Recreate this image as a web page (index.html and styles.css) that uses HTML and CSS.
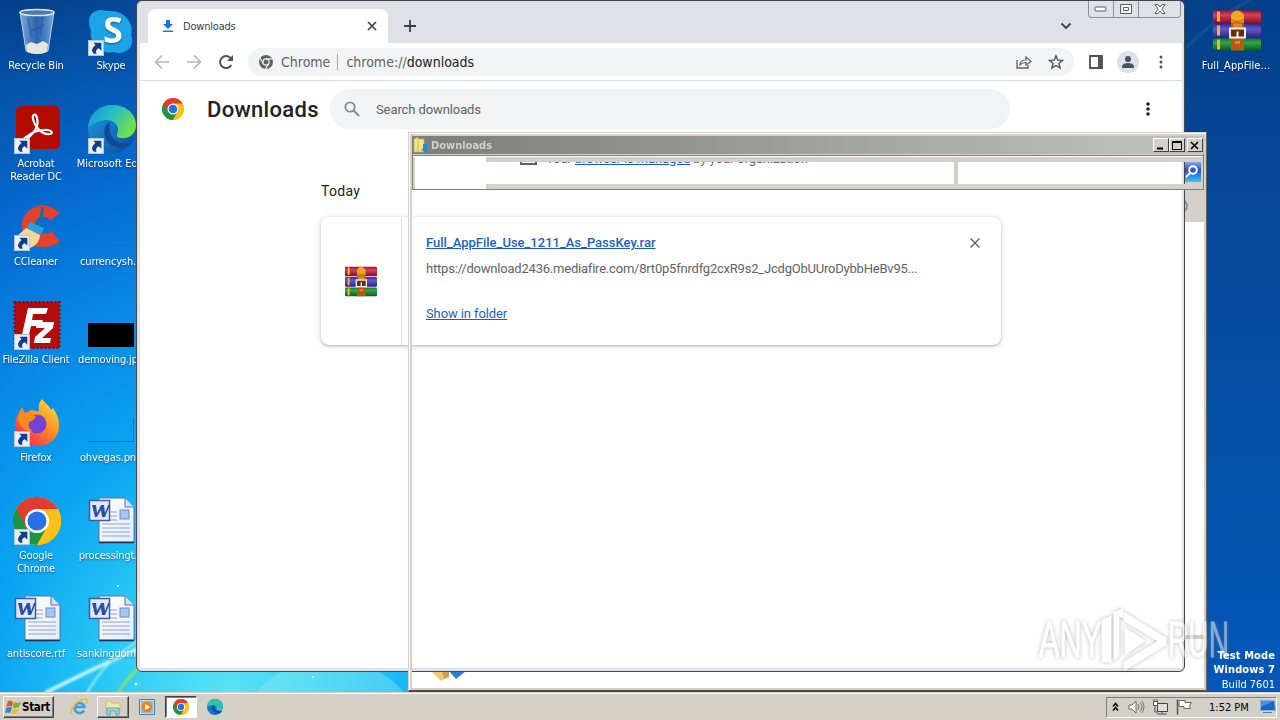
FILE: index.html
```html
<!DOCTYPE html>
<html lang="en">
<head>
    <meta charset="UTF-8">
    <meta name="viewport" content="width=device-width, initial-scale=1.0">
    <title>Downloads</title>
    <link rel="stylesheet" href="styles.css">
</head>
<body>
    <!-- Shared icons -->
    <svg class="sprite" width="0" height="0">
        <defs>
            <linearGradient id="paper" x1="0" y1="0" x2="1" y2="1"><stop offset="0" stop-color="#fff"/><stop offset="1" stop-color="#e3ebfa"/></linearGradient>
            <linearGradient id="book-red" x1="0" y1="0" x2="0" y2="1"><stop offset="0" stop-color="#a01030"/><stop offset=".35" stop-color="#d8405a"/><stop offset="1" stop-color="#7d0c26"/></linearGradient>
            <linearGradient id="book-blue" x1="0" y1="0" x2="0" y2="1"><stop offset="0" stop-color="#4030a0"/><stop offset=".35" stop-color="#6458c8"/><stop offset="1" stop-color="#2c2180"/></linearGradient>
            <linearGradient id="book-green" x1="0" y1="0" x2="0" y2="1"><stop offset="0" stop-color="#107830"/><stop offset=".35" stop-color="#35a648"/><stop offset="1" stop-color="#085a20"/></linearGradient>
            <linearGradient id="edge-top" x1="0" y1="0" x2="1" y2=".5"><stop offset="0" stop-color="#1590d8"/><stop offset=".5" stop-color="#27bcc8"/><stop offset="1" stop-color="#6fe04a"/></linearGradient>
            <linearGradient id="edge-low" x1="0" y1="0" x2="1" y2="1"><stop offset="0" stop-color="#1b9de2"/><stop offset="1" stop-color="#0c4a9a"/></linearGradient>
            <linearGradient id="fox" x1="1" y1="0" x2=".2" y2="1"><stop offset="0" stop-color="#fff04a"/><stop offset=".45" stop-color="#ff9722"/><stop offset="1" stop-color="#f5244f"/></linearGradient>
            <linearGradient id="bin" x1="0" y1="0" x2="1" y2="0"><stop offset="0" stop-color="#a9c8e8" stop-opacity=".8"/><stop offset=".5" stop-color="#3f78bf" stop-opacity=".6"/><stop offset="1" stop-color="#9bbde2" stop-opacity=".8"/></linearGradient>
        </defs>
        <symbol id="chrome" viewBox="0 0 48 48">
            <circle cx="24" cy="24" r="24" fill="#fbc116"/>
            <path d="M24 24 3.2 12A24 24 0 0 0 24 48L34.4 30z" fill="#229342"/>
            <path d="M24 24 34.4 30 24 48A24 24 0 0 0 44.8 12H24z" fill="#fbc116"/>
            <path d="M3.2 12A24 24 0 0 1 44.8 12H24L13.6 30z" fill="#e33b2e"/>
            <circle cx="24" cy="24" r="12" fill="#fff"/>
            <circle cx="24" cy="24" r="9.5" fill="#2a6fe8"/>
        </symbol>
        <symbol id="winrar" viewBox="0 0 48 42">
            <rect y="1" width="48" height="13" rx="1.500" fill="url(#book-red)"/>
            <rect y="15" width="48" height="13" rx="1.500" fill="url(#book-blue)"/>
            <rect y="29" width="48" height="12" rx="1.500" fill="url(#book-green)"/>
            <path d="M4 2h3v10H4zM4 16h3v10H4zM4 30h3v10H4z" fill="#f3b52d"/>
            <path d="M18 13h13v28H18z" fill="#b65a12"/>
            <path d="M18 13V5q6-8 13 0v8z" fill="#f3a51d"/>
            <path d="M18 10q7 4 13 0" fill="none" stroke="#b36408"/>
            <path d="M20 14h9v5h-9z" fill="#d98a1c"/>
            <rect x="17" y="19" width="15" height="9" fill="#6e2808" stroke="#eee" stroke-width="2"/>
            <path d="M24.500 22v6" stroke="#fff" stroke-width="2"/>
            <path d="M22 33h5" stroke="#ed9c42" stroke-width="2"/>
        </symbol>
        <symbol id="word" viewBox="0 0 48 48">
            <path d="M12 2h26l9 9v35H12z" fill="url(#paper)" stroke="#58709f"/>
            <path d="M47 46.500H12" stroke="#1c315c" stroke-width="1.500"/>
            <path d="M38 2v9h9" fill="#d5e0f5" stroke="#58709f"/>
            <path d="M15 16h15M15 20h15M15 24h15M15 28h28M15 32h28M15 36h28M15 40h28" stroke="#8ba4d6"/>
            <rect x="33" y="14" width="9" height="9" fill="#a6c4ee" stroke="#6d8cc4"/>
            <rect x="2.500" y="4.500" width="20" height="20" fill="#dfe9fa" stroke="#3b5da5" stroke-width="1.500"/>
            <path d="M5 9h4l1 8 4-8h3l1 8 3-8h2l-5 12h-3l-1-7-4 7H8z" fill="#2d50a0"/>
        </symbol>
        <symbol id="shortcut" viewBox="0 0 15 15">
            <rect x=".5" y=".5" width="14" height="14" fill="#e8f0f8" stroke="#b5c3d3"/>
            <path d="M5 2.500h7.500V10l-2.300-2.300Q6.500 9 8 13H5.500Q1.500 9 7 4.700z" fill="#123f84"/>
        </symbol>
        <symbol id="edge" viewBox="0 0 48 48">
            <circle cx="24" cy="24" r="24" fill="url(#edge-low)"/>
            <path d="M0 23C1 8 12 0 25 0c14 0 23 10 23 20 0 9-7 14-15 13-6 0-4-4-3-7 1-8-8-13-17-10C6 18 2 20 0 23z" fill="url(#edge-top)"/>
            <path d="M22 17c-8 3-8 18 3 24 8 4 16 1 20-5-8 6-27 1-23-19z" fill="#0d4b98"/>
        </symbol>
        <symbol id="edge-small" viewBox="0 0 16 16">
            <circle cx="8" cy="8" r="8" fill="#1377cf"/>
            <path d="M0 8C0 3 4 0 8 0c5 0 8 3 8 7 0 3-2 4-5 4-2 0-1-1-1-2 0-3-6-4-10-1z" fill="#2fc2a8"/>
            <path d="M7 6c-3 1-2 6 2 8 3 1 5 0 6-2-3 1-8 0-8-6z" fill="#0d4b98"/>
            <path d="M10 9c0 2 2 3 6 2v-1q-2 1-5 1-2 0-1-2z" fill="#d4d0c8"/>
        </symbol>
    </svg>

    <div class="desktop">
        <svg class="wallpaper" viewBox="0 0 1280 720">
            <defs><filter id="soft"><feGaussianBlur stdDeviation="1"/></filter></defs>
            <ellipse cx="330" cy="735" rx="90" ry="75" fill="#9aeaf2" opacity=".35"/>
            <g fill="none" filter="url(#soft)">
                <path d="M45 693Q90 670 140 648" stroke="#b9f4ff" stroke-width="4"/>
                <path d="M87 693Q105 660 140 640" stroke="#9defff" stroke-width="2"/>
                <path d="M118 693Q126 680 140 666" stroke="#83e66c" stroke-width="3"/>
                <path d="M1186 48Q1220 15 1250 0" stroke="#3f7f9a" stroke-width="2" opacity=".4"/>
            </g>
            <g fill="#d9fbff"><circle cx="118" cy="586" r="1"/><circle cx="136" cy="684" r="1.500"/><circle cx="313" cy="677" r="1"/></g>
        </svg>

        <!-- Desktop shortcuts -->
        <div class="shortcuts">
            <div class="shortcut">
                <svg class="icon" viewBox="0 0 48 48">
                    <path d="M7 4h34l-6 39q-11 5-22 0z" fill="url(#bin)" stroke="#b8cde2"/>
                    <path d="m13 37 5-3 6 2 6-3 5 3-1 8q-10 4-20 0z" fill="#e6e5de"/>
                    <path d="m15 10 4 20M30 9l-3 17M16 24l15-7" stroke="#1c56a0" stroke-width="2" opacity=".5"/>
                    <ellipse cx="24" cy="4.500" rx="17" ry="3" fill="#4c79b2" stroke="#e0e8ef" stroke-width="1.500"/>
                </svg>
                <span>Recycle Bin</span>
            </div>
            <div class="shortcut">
                <svg class="icon" viewBox="0 0 48 48">
                    <path d="M14 2q5 1 8 1c15-1 26 13 22 24 5 11-6 21-17 17C14 47 2 36 4 22-1 11 4 2 14 2z" fill="#1ca5e6"/>
                    <text class="skype-s" x="16" y="35">S</text>
                    <use href="#shortcut" x="1" y="32" width="16" height="16"/>
                </svg>
                <span>Skype</span>
            </div>
            <div class="shortcut">
                <svg class="icon" viewBox="0 0 48 48">
                    <rect x="3" y="0" width="44" height="43" rx="5" fill="#b30b00"/>
                    <path d="M12 34c10-7 14-15 12-22-1-5-5-4-4 1 2 8 9 16 17 15 4-1 1-5-6-4-6 0-13 3-18 7-4 3-4 6-1 3z" fill="none" stroke="#fff" stroke-width="2.200"/>
                    <use href="#shortcut" x="1" y="32" width="16" height="16"/>
                </svg>
                <span>Acrobat<br>Reader DC</span>
            </div>
            <div class="shortcut">
                <svg class="icon" viewBox="0 0 48 48">
                    <use href="#edge" x="1" y="-1" width="48" height="48"/>
                    <use href="#shortcut" x="1" y="32" width="16" height="16"/>
                </svg>
                <span class="wide">Microsoft Edge</span>
            </div>
            <div class="shortcut">
                <svg class="icon" viewBox="0 0 48 48">
                    <path d="M47 9C32-6 9 3 9 22c0 20 20 27 38 16l-8-11c-9 7-17 1-17-6 0-8 9-11 16-5z" fill="#e1432d"/>
                    <path d="m30 3-4 19" stroke="#1670ae" stroke-width="3"/>
                    <path d="m17 18 14 6-3 7-15-6z" fill="#2c9fd9"/>
                    <path d="m13 24 14 7q0 9-10 13Q6 42 2 34z" fill="#f4d59a"/>
                    <use href="#shortcut" x="1" y="31" width="16" height="16"/>
                </svg>
                <span>CCleaner</span>
            </div>
            <div class="shortcut">
                <div class="thumb thumb-line"></div>
                <span>currencysh...</span>
            </div>
            <div class="shortcut">
                <svg class="icon" viewBox="0 0 48 48">
                    <rect x="1.500" y="0" width="45" height="46" fill="#b40b0b" stroke="#8f0909" stroke-width="2" stroke-dasharray="2 2"/>
                    <path d="M15 6h20l-2 6H20l-1 6h11l-2 6H18l-3 13H8zM24 20h17l-1 6-11 10h9l-1 5H21l1-6 10-9h-9z" fill="#fff"/>
                    <use href="#shortcut" x="1" y="32" width="16" height="16"/>
                </svg>
                <span>FileZilla Client</span>
            </div>
            <div class="shortcut">
                <div class="thumb thumb-black"></div>
                <span>demoving.jpg</span>
            </div>
            <div class="shortcut">
                <svg class="icon" viewBox="0 0 48 48">
                    <path d="M29-1c3 4 7 6 9 11l2-2c12 17 6 37-15 38C7 47-3 31 5 14l4-7 3 6 6-3c4 0 5 2 8 1-1-5 0-9 3-12z" fill="url(#fox)"/>
                    <circle cx="24" cy="24" r="9.500" fill="#7542d6"/>
                    <path d="M7 12q7 0 10 3l6 1q-2 5-7 6-2 6 4 9-13 0-15-12z" fill="#ff8b20"/>
                    <use href="#shortcut" x="1" y="31" width="16" height="16"/>
                </svg>
                <span>Firefox</span>
            </div>
            <div class="shortcut">
                <div class="thumb thumb-line"></div>
                <span>ohvegas.png</span>
            </div>
            <div class="shortcut">
                <svg class="icon" viewBox="0 0 48 48">
                    <use href="#chrome" y="-1" width="48" height="48"/>
                    <use href="#shortcut" x="1" y="31" width="16" height="16"/>
                </svg>
                <span>Google<br>Chrome</span>
            </div>
            <div class="shortcut"><svg class="icon"><use href="#word" y="-2" width="48" height="48"/></svg><span>processingt...</span></div>
            <div class="shortcut"><svg class="icon"><use href="#word" y="-2" width="48" height="48"/></svg><span>antiscore.rtf</span></div>
            <div class="shortcut"><svg class="icon"><use href="#word" y="-2" width="48" height="48"/></svg><span>sankingdom...</span></div>
        </div>
        <div class="shortcut shortcut-right">
            <svg class="icon"><use href="#winrar" y="1" width="48" height="43"/></svg>
            <span>Full_AppFile...</span>
        </div>

        <!-- Part of the folder window behind the browser -->
        <div class="folder-back">
            <svg class="folder-peek" viewBox="0 0 36 11"><path d="m0 0 10 10 8-5V0z" fill="#eccb72"/><path d="m11 0 2 8 5-2V0z" fill="#caa34f"/><path d="M18 0h17l-10 8z" fill="#2c7fd0"/></svg>
            <div class="folder-side"><span></span></div>
            <div class="folder-mark"></div>
        </div>

        <!-- Browser window -->
        <div class="browser">
            <div class="tabstrip">
                <div class="tab">
                    <svg width="12" height="14" viewBox="0 0 12 14"><path d="M4 1h4v4h3l-5 5-5-5h3zM1 11.500h10V13H1z" fill="#1a73e8"/></svg>
                    <span>Downloads</span>
                    <svg width="10" height="10" viewBox="0 0 10 10"><path d="m1 1 8 8M9 1 1 9" stroke="#3c4043" stroke-width="1.600"/></svg>
                </div>
                <svg class="new-tab" width="12" height="12" viewBox="0 0 12 12"><path d="M6 0v12M0 6h12" stroke="#3c4043" stroke-width="1.800"/></svg>
                <svg class="tab-search" width="12" height="8" viewBox="0 0 12 8"><path d="m1.500 1.500 4.500 4.500 4.500-4.500" fill="none" stroke="#3c4043" stroke-width="1.800"/></svg>
                <div class="caption">
                    <span><svg width="14" height="6"><rect x="1" y="1" width="11" height="4" rx="1" fill="#fff" stroke="#555b66"/></svg></span>
                    <span><svg width="12" height="10"><path d="M.5.5h11v9H.5zM3.500 3.500h5v3h-5z" fill="#fff" stroke="#555b66"/></svg></span>
                    <span><svg width="12" height="10" viewBox="0 0 12 10"><path d="M1 .5h3L6 3 8 .5h3L7.800 5 11 9.500H8L6 7 4 9.500H1L4.200 5z" fill="#fff" stroke="#555b66"/></svg></span>
                </div>
            </div>
            <div class="toolbar">
                <svg class="nav" viewBox="0 0 16 16"><path d="M15 8H2M8 1.500 1.500 8 8 14.500" fill="none" stroke="#b4b7ba" stroke-width="1.700"/></svg>
                <svg class="nav" viewBox="0 0 16 16"><path d="M1 8h13M8 1.500 14.500 8 8 14.500" fill="none" stroke="#b4b7ba" stroke-width="1.700"/></svg>
                <svg class="nav" viewBox="0 0 16 16"><path d="M13.300 11A6 6 0 1 1 12.500 4" fill="none" stroke="#505357" stroke-width="2"/><path d="M15 1v6H9z" fill="#505357"/></svg>
                <div class="omnibox">
                    <svg width="14" height="14" viewBox="0 0 14 14"><circle cx="7" cy="7" r="7" fill="#5f6368"/><circle cx="7" cy="7" r="3.100" fill="#5f6368" stroke="#f1f3f4" stroke-width="1.200"/><path d="M7 3.900h6.500M4.300 8.500 1 3M9.700 8.500 6.500 14" stroke="#f1f3f4" stroke-width="1.200"/></svg>
                    <span class="chip">Chrome</span>
                    <span class="url">chrome://<b>downloads</b></span>
                    <svg class="share" width="16" height="14" viewBox="0 0 16 14"><path d="M1 5v8h11v-3" fill="none" stroke="#5f6368" stroke-width="1.300"/><path d="M4 10q0-5 6-5V2l5 4.500L10 10V7.500Q6 7.500 4 10z" fill="none" stroke="#5f6368" stroke-width="1.200"/></svg>
                    <svg width="16" height="16" viewBox="0 0 16 16"><path d="m8 1.800 1.800 4.300 4.700.3-3.600 3 1.200 4.600L8 11.500 3.900 14l1.200-4.600-3.600-3 4.700-.3z" fill="none" stroke="#505357" stroke-width="1.400"/></svg>
                </div>
                <svg width="14" height="14" viewBox="0 0 14 14"><path d="M1 1h12v12H1z" fill="none" stroke="#505357" stroke-width="1.800"/><path d="M9 1h4v12H9z" fill="#505357"/></svg>
                <div class="avatar"><svg width="12" height="12" viewBox="0 0 12 12"><circle cx="6" cy="3" r="3" fill="#4a5262"/><path d="M0 12v-2q1-3 6-3t6 3v2z" fill="#4a5262"/></svg></div>
                <svg width="4" height="14" viewBox="0 0 4 14"><g fill="#505357"><circle cx="2" cy="2" r="1.500"/><circle cx="2" cy="7" r="1.500"/><circle cx="2" cy="12" r="1.500"/></g></svg>
            </div>
            <div class="page">
                <div class="page-header">
                    <svg width="22" height="22"><use href="#chrome" width="22" height="22"/></svg>
                    <h1>Downloads</h1>
                    <div class="search">
                        <svg width="16" height="16" viewBox="0 0 16 16"><circle cx="6" cy="6" r="4.700" fill="none" stroke="#85898d" stroke-width="1.800"/><path d="m9.500 9.500 5.500 5.500" stroke="#85898d" stroke-width="2"/></svg>
                        <span>Search downloads</span>
                    </div>
                    <svg class="page-menu" width="4" height="14" viewBox="0 0 4 14"><g fill="#202124"><circle cx="2" cy="2" r="1.800"/><circle cx="2" cy="7" r="1.800"/><circle cx="2" cy="12" r="1.800"/></g></svg>
                </div>
                <div class="managed">
                    <svg width="17" height="14" viewBox="0 0 17 14"><path d="M1 1h9v4h6v8H1z" fill="none" stroke="#5f6368" stroke-width="2"/><path d="M3 10h2M7 10h2M12 10h2M3 6h2M7 6h2" stroke="#5f6368" stroke-width="2"/></svg>
                    <span>Your <a>browser is managed</a> by your organization</span>
                </div>
                <div class="downloads">
                    <h2>Today</h2>
                    <div class="card">
                        <div class="file-icon"><svg width="32" height="31" viewBox="0 0 48 42" preserveAspectRatio="none"><use href="#winrar" width="48" height="42"/></svg></div>
                        <div class="details">
                            <a class="file-name">Full_AppFile_Use_1211_As_PassKey.rar</a>
                            <span class="file-url">https://download2436.mediafire.com/8rt0p5fnrdfg2cxR9s2_JcdgObUUroDybbHeBv95...</span>
                            <a class="show">Show in folder</a>
                        </div>
                        <svg class="remove" width="10" height="10" viewBox="0 0 10 10"><path d="m.5.5 9 9m0-9-9 9" stroke="#5f6368" stroke-width="1.400"/></svg>
                    </div>
                </div>
            </div>
        </div>

        <!-- Folder window, contents not painted yet -->
        <div class="folder">
            <div class="folder-title">
                <svg width="16" height="16" viewBox="0 0 16 16"><path d="M1 2 5 0v2h6v13H1z" fill="#f3e28b" stroke="#c9ad4d" stroke-width=".7"/><path d="M5 2v13" stroke="#d2b85b"/><path d="M10 7h4v5h2l-4 4-4-4h2z" fill="#1790d6"/></svg>
                <span>Downloads</span>
                <div class="buttons">
                    <span><svg width="10" height="9"><path d="M1 7.500h6" stroke="#000" stroke-width="2"/></svg></span>
                    <span><svg width="10" height="9"><path d="M.5 1.500h9M.5 1v7.500h9V1" fill="none" stroke="#000"/><path d="M0 1h10" stroke="#000" stroke-width="2"/></svg></span>
                    <span><svg width="10" height="9"><path d="m1 1 7 7m0-7-7 7" stroke="#000" stroke-width="1.600"/></svg></span>
                </div>
            </div>
            <div class="rebar">
                <div class="rebar-blank"></div>
                <div class="address"></div>
                <div class="find"></div>
                <svg class="find-button" width="18" height="32" viewBox="0 0 18 32"><defs><linearGradient id="find" x1="0" y1="0" x2="0" y2="1"><stop offset="0" stop-color="#8ba6e8"/><stop offset=".4" stop-color="#2850c8"/><stop offset="1" stop-color="#35c8ec"/></linearGradient></defs><path d="M0 5h16v20H0z" fill="url(#find)"/><circle cx="8" cy="13" r="3.800" fill="none" stroke="#fff" stroke-width="2"/><path d="m5 16-4 4" stroke="#fff" stroke-width="2"/></svg>
            </div>
        </div>

        <div class="taskbar">
            <div class="start">
                <svg width="17" height="15" viewBox="0 0 17 15"><path d="M3 1q3-1 5 1L7 7Q4 5 1 7z" fill="#e9562b"/><path d="M9 2q3 2 7 0l-2 5q-4 2-6 0z" fill="#6eb43f"/><path d="M1 8q3-2 6 0l-2 5q-2-1-5 0z" fill="#2c86cf"/><path d="M8 8q3 2 6 0l-2 5q-3 2-6 0z" fill="#f8bd25"/></svg>
                <b>Start</b>
            </div>
            <div class="quick">
                <div class="task"><svg width="18" height="18" viewBox="0 0 18 18"><path d="M14 12.500A5 5 0 1 1 14.500 9H5" fill="none" stroke="#38a1df" stroke-width="2.600"/><path d="M2 16Q-1 15 4 8T16 1q2 1 0 5" fill="none" stroke="#e7bd31" stroke-width="1.500"/></svg></div>
                <div class="task task-open"><svg width="18" height="17" viewBox="0 0 18 17"><path d="M2 2h5l1 2h8v10H2z" fill="#f4e6a3" stroke="#d9bd65"/><path d="M3 9h12v7h-3v-4H6v4H3z" fill="#9bd5f0" stroke="#4fa5cc"/></svg></div>
                <div class="task"><svg width="16" height="16" viewBox="0 0 16 16"><path d="M.5.5h15v15H.5z" fill="#b9dcf3" stroke="#3d83bc"/><path d="M2 2h12v12H2z" fill="#8dc0e4"/><circle cx="8" cy="8" r="5.500" fill="#f58218"/><path d="m6 5 5 3-5 3z" fill="#fff"/></svg></div>
                <div class="task task-active"><svg width="16" height="16"><use href="#chrome" width="16" height="16"/></svg></div>
                <div class="task"><svg width="16" height="16"><use href="#edge-small" width="16" height="16"/></svg></div>
            </div>
            <div class="tray">
                <svg width="7" height="10" viewBox="0 0 7 10"><path d="m1 4.500 2.500-3 2.500 3m-5 4 2.500-3 2.500 3" fill="none" stroke="#000" stroke-width="1.500"/></svg>
                <svg width="17" height="14" viewBox="0 0 17 14"><path d="M1 5h3l4-4v12L4 9H1z" fill="#fff" stroke="#666"/><path d="M10 4q2 3 0 6M12 2.500q4 4.500 0 9M14 1q4 6 0 12" fill="none" stroke="#777"/></svg>
                <svg width="17" height="16" viewBox="0 0 17 16"><path d="M5.500 4.500h10v8h-10z" fill="#ddd" stroke="#444"/><path d="M5 15h10M10 13v2M3 6v7h3" fill="none" stroke="#555"/><path d="M1.500 2.500h4v4h-4zM2 0v3M5 0v3" fill="#fff" stroke="#555"/></svg>
                <svg width="17" height="16" viewBox="0 0 17 16"><path d="M1.500.5v15" stroke="#555" stroke-width="1.500"/><path d="M3 1.500h6v2h6.500l-2 3 1 3H8v-2H3z" fill="#fff" stroke="#666"/></svg>
                <span>1:52 PM</span>
                <svg width="16" height="14" viewBox="0 0 16 14"><path d="M.5.500h14l1 10H.5z" fill="#1764c4" stroke="#91b2d6"/><path d="M1 1h13L1 7z" fill="#3d91e6"/><path d="M3 12h9v1H3z" fill="#678"/></svg>
            </div>
        </div>

        <svg class="watermark" width="210" height="76" viewBox="0 0 210 76">
            <text x="9" y="54" textLength="63" lengthAdjust="spacingAndGlyphs">ANY</text>
            <text x="138" y="54" textLength="61" lengthAdjust="spacingAndGlyphs">RUN</text>
            <path d="M72 59V17l9-4v46zM84 57V9l9-3v9l-4-2v40zM94 9l42 26v7L94 68v-9l34-21-34-20zM95 25l20 13-20 14z"/>
        </svg>

        <div class="build-info"><b>Test Mode</b><b>Windows 7</b><span>Build 7601</span></div>
    </div>
</body>
</html>
```
FILE: styles.css
```css
* {
    box-sizing: border-box;
}

body {
    margin: 0;
    font-family: 'DejaVu Sans Condensed', 'DejaVu Sans', sans-serif;
    font-stretch: condensed;
    font-size: 11px;
}

svg {
    display: block;
    flex: none;
}

.sprite {
    position: absolute;
}

.desktop {
    position: relative;
    width: 1280px;
    height: 720px;
    overflow: hidden;
    background: radial-gradient(ellipse 640px 740px at 230px 700px, #5be4f4 0%, #28c8f5 20%, #0aa4f2 37%, #0888e4 55%, #066cd2 72%, rgba(6, 80, 180, 0) 100%), linear-gradient(#04408a, #0450a8 60%, #0458bc);
}

.wallpaper {
    position: absolute;
    inset: 0;
}

/* Desktop shortcuts */
.shortcuts {
    display: grid;
    grid-template-columns: 74px 74px;
    grid-auto-rows: 98px;
    width: 148px;
    padding-top: 8px;
}

.shortcut {
    display: flex;
    flex-direction: column;
    align-items: center;
    position: relative;
    color: #fff;
    line-height: 13px;
    text-align: center;
    white-space: nowrap;
    letter-spacing: -0.15px;
    text-shadow: 0 1px 2px rgba(0, 30, 80, 0.6);
}

.shortcut span {
    margin-top: 3px;
}

.shortcut:nth-child(odd) span {
    margin-right: 2px;
}

.shortcut .wide {
    margin-left: 5px;
    letter-spacing: 0.05px;
}

.icon {
    width: 48px;
    height: 48px;
    overflow: visible;
}

.skype-s {
    font: bold 36px 'Open Sans', sans-serif;
    fill: #fff;
}

.thumb {
    width: 46px;
    height: 48px;
}

.thumb-line {
    height: 24px;
    margin: 18px 0 6px;
    border-right: 1px solid #1674a8;
    border-bottom: 1px solid #1674a8;
}

.thumb-black {
    height: 24px;
    margin: 21px 0 3px;
    background: #000;
}

.shortcut-right {
    position: absolute;
    left: 1200px;
    top: 8px;
    width: 74px;
    letter-spacing: 0.1px;
}

.build-info {
    position: absolute;
    right: 5px;
    top: 649px;
    display: flex;
    flex-direction: column;
    align-items: flex-end;
    color: #fff;
    line-height: 16px;
}

.build-info b {
    line-height: 14px;
    letter-spacing: 0.1px;
}

/* Browser */
.browser {
    position: absolute;
    left: 136px;
    top: 0;
    width: 1049px;
    height: 672px;
    padding: 1px 2px 3px 3px;
    border: 1px solid #45454d;
    border-radius: 6px;
    background: #dee1e6;
    display: flex;
    flex-direction: column;
}

.tabstrip {
    height: 41px;
    display: flex;
    align-items: flex-end;
    padding-left: 8px;
}

.tab {
    width: 240px;
    height: 34px;
    border-radius: 8px 8px 0 0;
    background: #fff;
    display: flex;
    align-items: center;
    padding: 0 11px 0 14px;
    color: #3c4043;
}

.tab span {
    flex: 1;
    margin-left: 9px;
    letter-spacing: -0.2px;
}

.new-tab {
    margin: 0 0 11px 16px;
}

.tab-search {
    margin: 0 16px 13px auto;
}

.caption {
    align-self: flex-start;
    display: flex;
    height: 17px;
    margin: -1px 1px 0 0;
    border: 1px solid #8c9099;
    border-top: 0;
    border-radius: 0 0 4px 4px;
}

.caption span {
    width: 25px;
    display: flex;
    align-items: center;
    justify-content: center;
    border-right: 1px solid #8c9099;
}

.caption span:last-child {
    width: 41px;
    border: 0;
}

.toolbar {
    height: 38px;
    display: flex;
    align-items: center;
    background: #fff;
    border-bottom: 1px solid #dadce0;
    padding: 0 18px 0 14px;
}

.nav {
    width: 16px;
    height: 16px;
    margin-right: 16px;
}

.omnibox {
    display: flex;
    align-items: center;
    width: 826px;
    height: 28px;
    margin: 0 15px 0 -2px;
    padding: 0 10px 0 11px;
    border-radius: 14px;
    background: #f1f3f4;
    font-size: 14px;
    color: #5f6368;
}

.chip {
    margin-left: 8px;
    padding-right: 7px;
    border-right: 1px solid #a5a8ac;
}

.url {
    margin-left: 8px;
}

.url b {
    font-weight: normal;
    color: #202124;
}

.share {
    margin: 0 16px 0 auto;
}

.avatar {
    display: flex;
    align-items: center;
    justify-content: center;
    width: 22px;
    height: 22px;
    margin: 0 20px 0 14px;
    border-radius: 50%;
    background: #dee1e6;
}

.page {
    flex: 1;
    background: #fff;
    font-family: Roboto, sans-serif;
    font-stretch: normal;
    font-size: 13px;
}

.page-header {
    display: flex;
    align-items: center;
    height: 56px;
    padding: 0 32px 0 22px;
}

.page-header h1 {
    width: 123px;
    margin: 0 0 0 23px;
    font-size: 22px;
    font-weight: 500;
    letter-spacing: 0.3px;
    color: #202124;
}

.search {
    width: 680px;
    height: 40px;
    padding: 0 14px;
    border-radius: 20px;
    background: #f1f3f4;
    display: flex;
    align-items: center;
    gap: 16px;
    color: #5f6368;
    letter-spacing: -0.1px;
}

.page-menu {
    margin-left: auto;
}

.managed {
    display: flex;
    align-items: center;
    height: 42px;
    padding-left: 380px;
    gap: 9px;
    color: #5f6368;
    letter-spacing: -0.12px;
}

.managed a,
.details a {
    color: #1a5fc8;
    text-decoration: underline;
}

.downloads {
    width: 680px;
    margin-left: 181px;
}

.downloads h2 {
    margin: 0;
    height: 38px;
    line-height: 24px;
    font-size: 14px;
    font-weight: 400;
    color: #202124;
    letter-spacing: 0.3px;
}

.card {
    display: flex;
    height: 128px;
    border-radius: 8px;
    box-shadow: 0 1px 2px rgba(60, 64, 67, 0.3), 0 1px 6px 1px rgba(60, 64, 67, 0.15);
}

.file-icon {
    width: 81px;
    display: flex;
    align-items: center;
    justify-content: center;
    border-right: 1px solid #dcdad2;
}

.details {
    width: 520px;
    padding: 18px 0 0 24px;
    display: flex;
    flex-direction: column;
    align-items: flex-start;
    white-space: nowrap;
    line-height: 16px;
}

.file-name {
    font-weight: 500;
}

.file-url {
    margin: 10px 0 29px;
    color: #5f6368;
    letter-spacing: -0.21px;
}

.show {
    letter-spacing: -0.1px;
}

.remove {
    margin: 21px 0 0 48px;
}

/* Folder window */
.folder-back {
    position: absolute;
    left: 409px;
    top: 133px;
    width: 796px;
    height: 557px;
    background: #fff;
}

.folder-peek {
    position: absolute;
    left: 22px;
    top: 538px;
    width: 36px;
    height: 11px;
}

.folder-side {
    position: absolute;
    right: 1px;
    top: 57px;
    width: 20px;
    height: 32px;
    overflow: hidden;
    background: #d4d0c8;
}

.folder-side span {
    display: block;
    width: 14px;
    height: 14px;
    margin: 9px 0 0 -10px;
    border: 2px solid #8791a5;
    border-radius: 50%;
}

.folder-mark {
    position: absolute;
    right: 1px;
    top: 502px;
    width: 20px;
    height: 4px;
    background: #d4d0c8;
}

.folder {
    position: absolute;
    left: 408px;
    top: 132px;
    width: 799px;
    height: 560px;
    padding: 1px;
    border: 1px solid #d4d0c8;
    border-right-color: #65635f;
    border-bottom: 2px solid #504e4a;
    box-shadow: inset 1px 1px #fff, inset 3px 3px #d4d0c8, inset -2px -2px #d4d0c8;
}

.folder-title {
    display: flex;
    align-items: center;
    height: 18px;
    margin: 2px 1px 0 2px;
    padding: 0 1px 0 1px;
    background: linear-gradient(90deg, #7d7d79, #c1c4c0);
    color: #d4d0c8;
    font-weight: bold;
}

.folder-title > span {
    margin-left: 2px;
}

.buttons {
    display: flex;
    margin-left: auto;
}

.buttons span {
    width: 16px;
    height: 14px;
    display: flex;
    align-items: center;
    justify-content: center;
    background: #d4d0c8;
    border: 1px solid #fff;
    border-right-color: #404040;
    border-bottom-color: #404040;
}

.buttons span:last-child {
    margin-left: 2px;
}

.rebar {
    display: flex;
    height: 36px;
    margin: 0 1px 0 2px;
    padding-top: 2px;
    border: 1px solid #808080;
    border-top: 0;
    background: linear-gradient(#d4d0c8 1px, #808080 1px, #808080 2px, transparent 2px);
}

.rebar-blank {
    width: 73px;
    margin-top: 1px;
    border-left: 2px solid #d4d0c8;
    background: #fff;
    box-shadow: 0 -1px #fff;
}

.address,
.find {
    width: 470px;
    border: solid #d4d0c8;
    border-width: 5px 2px 5px 0;
    margin-top: 1px;
    box-shadow: 0 -1px #fff;
}

.find {
    flex: 1;
    border-width: 5px 0 5px 2px;
}

.find-button {
    margin-top: 1px;
    background: #d4d0c8;
    box-shadow: 0 -1px #fff;
}

/* Taskbar */
.taskbar {
    position: absolute;
    left: 0;
    top: 692px;
    width: 100%;
    height: 28px;
    padding: 3px 3px 2px;
    display: flex;
    align-items: center;
    background: #d4d0c8;
    border-top: 1px solid #d4d0c8;
    box-shadow: inset 0 1px #fff;
}

.start {
    display: flex;
    align-items: center;
    width: 51px;
    height: 22px;
    padding-left: 1px;
    border: 1px solid #fff;
    border-right-color: #404040;
    border-bottom-color: #404040;
    box-shadow: inset -1px -1px #808080;
}

.start b {
    font-size: 11.5px;
    letter-spacing: -0.3px;
}

.quick {
    display: flex;
    gap: 2px;
    margin-left: 9px;
}

.task {
    display: flex;
    align-items: center;
    justify-content: center;
    width: 32px;
    height: 22px;
}

.task-open {
    border: 1px solid #fff;
    border-right-color: #404040;
    border-bottom-color: #404040;
    box-shadow: inset -1px -1px #808080;
}

.task-active {
    background: #fff;
    border: 1px solid #404040;
    border-right-color: #fff;
    border-bottom-color: #fff;
    box-shadow: inset 1px 1px #808080;
}

.tray {
    display: flex;
    align-items: center;
    width: 171px;
    height: 21px;
    margin-left: auto;
    padding: 0 0 0 5px;
    border: 1px solid #808080;
    border-right-color: #fff;
    border-bottom-color: #fff;
}

.tray svg {
    margin-right: 7px;
}

.tray svg:first-child {
    margin-right: 9px;
}

.tray span {
    margin: 0 11px 0 9px;
    width: 40px;
    white-space: nowrap;
}

.tray svg:last-child {
    margin: 0;
}

/* Recording watermark */
.watermark {
    position: absolute;
    left: 1030px;
    top: 603px;
    fill: #fff;
    stroke: #fff;
    stroke-width: 0.8px;
    opacity: 0.5;
    filter: drop-shadow(0 0 2px #777);
    font: 50px 'Liberation Sans', sans-serif;
}
```
